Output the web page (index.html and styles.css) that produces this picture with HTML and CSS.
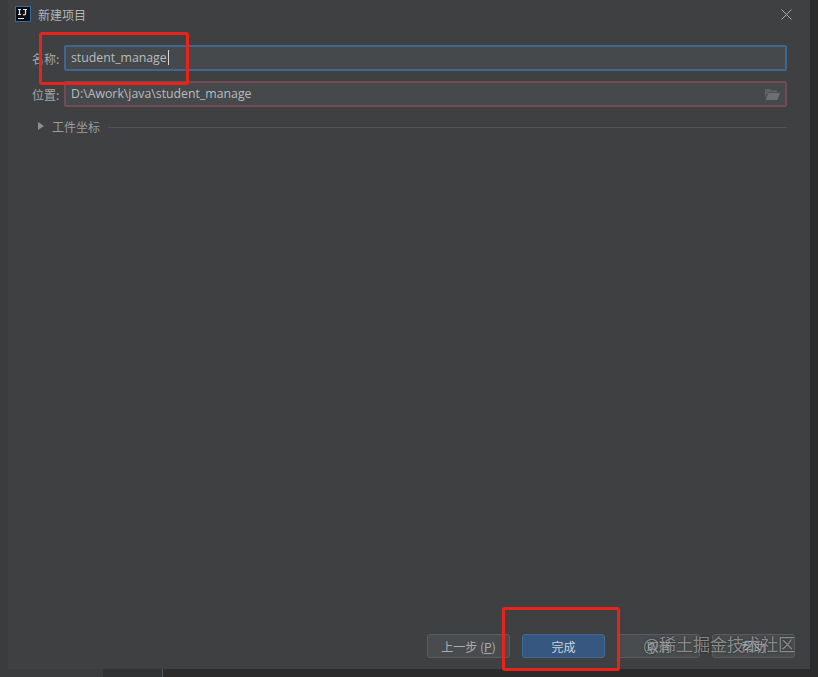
FILE: index.html
```html
<!DOCTYPE html>
<html lang="zh-CN">
<head>
    <meta charset="UTF-8">
    <title>新建项目</title>
    <link rel="stylesheet" href="styles.css">
</head>
<body>
    <div class="stage">
        <div class="top-row">
            <div class="behind-left"></div>
            <div class="dialog">
                <div class="title-bar">
                    <svg class="app-icon" width="16" height="16" viewBox="0 0 16 16">
                        <rect x="0.5" y="0.5" width="15" height="15" fill="#0c0f14" stroke="#2f6ea5"/>
                        <rect x="3" y="12" width="6" height="1" fill="#e8e8e8"/>
                        <path d="M3 3.5h3M4.5 3.5v5M3 8.5h3M8 3.5h4M10.5 3.5v4.2c0 1.2-1.3 1.4-2.4.7" fill="none" stroke="#e8e8e8" stroke-width="1.2"/>
                    </svg>
                    <span class="title-text">新建项目</span>
                    <svg class="close-icon" width="11" height="11" viewBox="0 0 11 11">
                        <path d="M0.5 0.5l10 10M10.5 0.5l-10 10" stroke="#a9acae" stroke-width="1" fill="none"/>
                    </svg>
                </div>

                <div class="form">
                    <div class="form-row">
                        <label class="form-label">名称:</label>
                        <div class="field field-focus">student_manage<span class="caret"></span></div>
                    </div>
                    <div class="form-row">
                        <label class="form-label">位置:</label>
                        <div class="field field-error">
                            <span>D:\Awork\java\student_manage</span>
                            <svg class="folder-icon" width="15" height="12" viewBox="0 0 15 12">
                                <path d="M0 1h5l1.2 1.5H12V4H3L0 10z" fill="#5f6365"/>
                                <path d="M3.4 4.8H15L12.4 12H0.6z" fill="#6c7072"/>
                            </svg>
                        </div>
                    </div>
                    <div class="group-row">
                        <span class="arrow"></span>
                        <span class="group-title">工件坐标</span>
                        <span class="group-line"></span>
                    </div>
                </div>

                <div class="buttons">
                    <button class="btn">上一步 (<u>P</u>)</button>
                    <button class="btn btn-primary">完成</button>
                    <button class="btn">取消</button>
                    <button class="btn">帮助</button>
                </div>
            </div>
            <div class="behind-right"></div>
        </div>
        <div class="bottom-strip">
            <div class="strip-light"></div>
            <div class="strip-tab"></div>
            <div class="strip-rest"></div>
        </div>

        <div class="mark mark-name"></div>
        <div class="mark mark-done"></div>
        <div class="watermark">@稀土掘金技术社区</div>
    </div>
</body>
</html>
```

FILE: styles.css
```css
html, body {
    margin: 0;
    padding: 0;
}

body {
    background-color: #2b2b2b;
    font-family: "Noto Sans CJK SC", "Noto Sans", sans-serif;
    color: #b4b7b9;
    overflow: hidden;
}

.stage {
    position: relative;
    display: flex;
    flex-direction: column;
    width: 818px;
    height: 677px;
    overflow: hidden;
}

.top-row {
    display: flex;
    height: 669px;
}

.behind-left {
    width: 8px;
    background-color: #3a3c3e;
}

.behind-right {
    flex: 1;
    background-color: #2b2b2b;
}

.bottom-strip {
    display: flex;
    flex: 1;
    background-color: #2b2b2b;
}

.strip-light {
    width: 103px;
    background-color: #3a3c3e;
}

.strip-tab {
    width: 59px;
    background-color: #2f3133;
    border-right: 1px solid #55585a;
}

.strip-rest {
    flex: 1;
}

.dialog {
    display: flex;
    flex-direction: column;
    width: 802px;
    background-color: #3e4042;
}

.title-bar {
    box-sizing: border-box;
    display: flex;
    align-items: center;
    height: 30px;
    padding: 0 18px 2px 7px;
}

.app-icon {
    margin-right: 7px;
}

.title-text {
    flex: 1;
    font-size: 12px;
    color: #b2b5b7;
}

.form {
    flex: 1;
    padding: 15px 23px 0 23px;
}

.form-row {
    display: flex;
    align-items: center;
    gap: 4px;
    margin-bottom: 10px;
}

.form-label {
    box-sizing: border-box;
    width: 29px;
    padding-left: 1px;
    font-size: 12px;
    color: #a4a7a9;
    white-space: nowrap;
}

.field {
    box-sizing: border-box;
    display: flex;
    align-items: center;
    flex: 1;
    height: 26px;
    padding: 0 5px 2px 5px;
    background-color: #46494b;
    border: 2px solid #40678f;
    border-radius: 2px;
    font-family: "Open Sans", "Noto Sans", sans-serif;
    font-size: 12.3px;
    color: #b9bcbe;
}

.field-error {
    justify-content: space-between;
    border-color: #714c55;
}

.caret {
    width: 1px;
    height: 15px;
    margin-left: 1px;
    background-color: #d6d8d9;
}

.folder-icon {
    margin-top: 2px;
}

.group-row {
    display: flex;
    align-items: center;
    height: 18px;
    margin-top: 9px;
    padding-left: 7px;
}

.arrow {
    width: 0;
    height: 0;
    margin-right: 8px;
    border-left: 6px solid #8d9194;
    border-top: 4px solid transparent;
    border-bottom: 4px solid transparent;
}

.group-title {
    margin-right: 8px;
    font-size: 12px;
    color: #9a9da0;
    white-space: nowrap;
}

.group-line {
    flex: 1;
    height: 1px;
    margin-top: 2px;
    background-color: #515456;
}

.buttons {
    display: flex;
    justify-content: flex-end;
    gap: 12px;
    padding: 0 15px 11px 0;
}

.btn {
    box-sizing: border-box;
    width: 83px;
    height: 24px;
    padding: 0;
    background-color: #494c4e;
    border: 1px solid #5a5d5f;
    border-radius: 3px;
    font-family: inherit;
    font-size: 12px;
    color: #a9acae;
}

.btn-primary {
    background-color: #365880;
    border-color: #42698f;
    color: #d0d5da;
}

.mark {
    position: absolute;
    box-sizing: border-box;
    border: 3px solid #e8231b;
    border-radius: 3px;
}

.mark-name {
    left: 39px;
    top: 32px;
    width: 150px;
    height: 53px;
}

.mark-done {
    left: 502px;
    top: 607px;
    width: 118px;
    height: 64px;
}

.watermark {
    position: absolute;
    left: 643px;
    top: 631px;
    font-size: 17px;
    line-height: 26px;
    color: rgba(255, 255, 255, 0.45);
    text-shadow: 0 0 2px rgba(0, 0, 0, 0.6);
    white-space: nowrap;
}
```
